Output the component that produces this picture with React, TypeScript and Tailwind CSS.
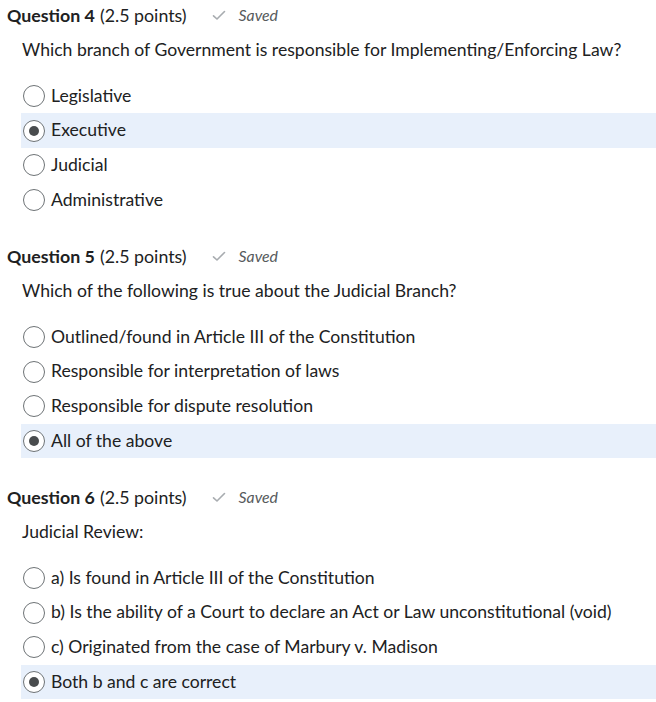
import React from "react";

type Q = { num: number; text: string; options: string[]; selected: number };

const questions: Q[] = [
  {
    num: 4,
    text: "Which branch of Government is responsible for Implementing/Enforcing Law?",
    options: ["Legislative", "Executive", "Judicial", "Administrative"],
    selected: 1,
  },
  {
    num: 5,
    text: "Which of the following is true about the Judicial Branch?",
    options: [
      "Outlined/found in Article III of the Constitution",
      "Responsible for interpretation of laws",
      "Responsible for dispute resolution",
      "All of the above",
    ],
    selected: 3,
  },
  {
    num: 6,
    text: "Judicial Review:",
    options: [
      "a) Is found in Article III of the Constitution",
      "b) Is the ability of a Court to declare an Act or Law unconstitutional (void)",
      "c) Originated from the case of Marbury v. Madison",
      "Both b and c are correct",
    ],
    selected: 3,
  },
];

function Radio({ checked }: { checked: boolean }) {
  return (
    <span className="flex items-center justify-center w-[22px] h-[22px] rounded-full border-[1.5px] border-[#6e7376] bg-white shrink-0">
      {checked && <span className="w-[10px] h-[10px] rounded-full bg-[#494c4e]" />}
    </span>
  );
}

function Question({ q }: { q: Q }) {
  return (
    <section className="h-[241px]">
      <div className="h-[30px] flex items-center pl-[7px] text-[17.8px]">
        <span className="font-bold">Question {q.num}</span>
        <span className="ml-[5px]">(2.5 points)</span>
        <svg
          className="ml-[25px]"
          width="14"
          height="11"
          viewBox="0 0 14 11"
          fill="none"
        >
          <path d="M1.5 5.8 L5 9 L12.5 1.5" stroke="#a8acb0" strokeWidth="1.6" strokeLinecap="round" strokeLinejoin="round" />
        </svg>
        <span className="ml-[13px] italic text-[15.8px] text-[#565a5c]">Saved</span>
      </div>
      <div className="mt-[8px] pl-[22px] h-[24px] leading-[24px] text-[17.6px]">{q.text}</div>
      <div className="mt-[16.67px] pl-[21px]">
        {q.options.map((o, i) => (
          <div
            key={i}
            className={`h-[34.67px] flex items-center pl-[2px] text-[17.6px] ${
              i === q.selected ? "bg-[#e8f0fb]" : ""
            }`}
          >
            <Radio checked={i === q.selected} />
            <span className="ml-[6px]">{o}</span>
          </div>
        ))}
      </div>
    </section>
  );
}

export default function App() {
  return (
    <div className="w-[656px] h-[702px] overflow-hidden bg-white text-[#202122] font-['Lato',sans-serif]">
      {questions.map((q) => (
        <Question key={q.num} q={q} />
      ))}
    </div>
  );
}
